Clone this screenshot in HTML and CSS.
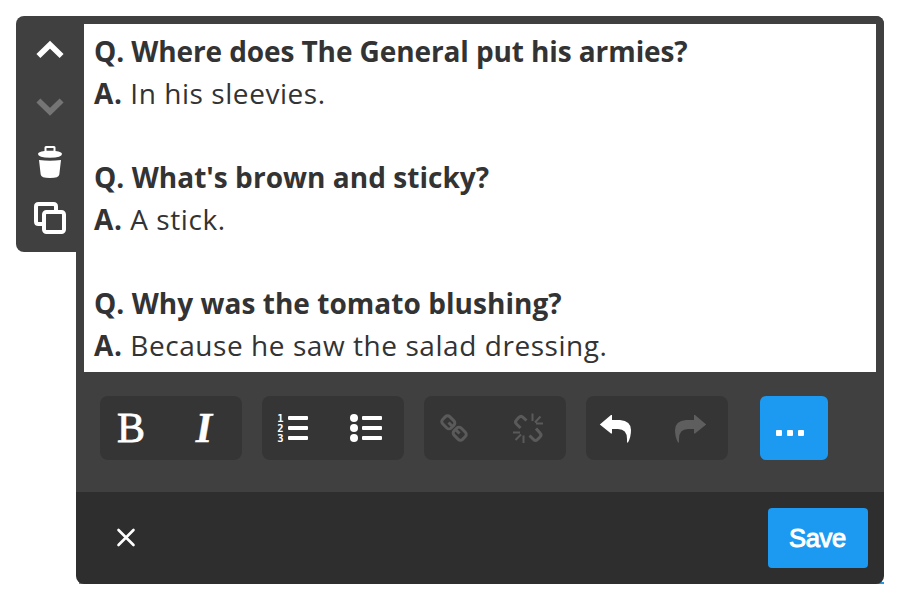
FILE: index.html
```
<!DOCTYPE html>
<html lang="en">
<head>
  <meta charset="UTF-8" />
  <meta name="viewport" content="width=device-width, initial-scale=1.0" />
  <title>Text Block Editor</title>
  <link rel="stylesheet" href="styles.css">
</head>
<body>
  <div class="block">
    <div class="side-controls">
      <button aria-label="Move up">
        <svg width="40" height="40" viewBox="0 0 40 40"><path class="chevron" d="M8.4 26.1 20 14.7 31.6 26.1"/></svg>
      </button>
      <button class="disabled" aria-label="Move down">
        <svg width="40" height="40" viewBox="0 0 40 40"><path class="chevron" d="M8.4 14.4 20 25.8 31.6 14.4"/></svg>
      </button>
      <button aria-label="Delete">
        <svg width="40" height="40" viewBox="0 0 40 40">
          <path fill="#fff" fill-rule="evenodd" d="M14.5 9V5.5Q14.5 4 16 4H24Q25.5 4 25.5 5.5V9C30 9.5 32 10.8 32 12Q32 15.7 20 15.7T8 12C8 10.8 10 9.5 14.5 9ZM16.500 6V8.700H23.500V6Z"/>
          <path fill="#fff" d="M9 18Q20 19.3 31 18L29.3 32.5Q29 36 20 36T10.7 32.5Z"/>
        </svg>
      </button>
      <button aria-label="Duplicate">
        <svg width="40" height="40" viewBox="0 0 40 40">
          <path class="outline" d="M12 26H8.500Q6 26 6 23.500V8.500Q6 6 8.500 6H23.500Q26 6 26 8.500V12"/>
          <rect class="outline" x="14" y="14" width="20" height="20" rx="2.500"/>
        </svg>
      </button>
    </div>

    <div class="panel">
      <div class="editor" contenteditable="true" spellcheck="false">
        <p class="question"><b>Q. Where does The General put his armies?</b></p>
        <p><b>A.</b> In his sleevies.</p>
        <p><br></p>
        <p class="question"><b>Q. What's brown and sticky?</b></p>
        <p><b>A.</b> A stick.</p>
        <p><br></p>
        <p class="question"><b>Q. Why was the tomato blushing?</b></p>
        <p><b>A.</b> Because he saw the salad dressing.</p>
      </div>

      <div class="toolbar">
        <div class="group">
          <button class="bold">B</button>
          <button class="italic">I</button>
        </div>
        <div class="group">
          <button aria-label="Numbered list">
            <svg width="71" height="64" viewBox="0 0 71 64" fill="#fff">
              <g class="digits">
                <text x="15.300" y="25.800">1</text>
                <text x="15.300" y="35.800">2</text>
                <text x="15.300" y="45.800">3</text>
              </g>
              <rect x="26" y="20" width="20" height="4" rx="1"/>
              <rect x="26" y="30" width="20" height="4" rx="1"/>
              <rect x="26" y="40" width="20" height="4" rx="1"/>
            </svg>
          </button>
          <button aria-label="Bullet list">
            <svg width="71" height="64" viewBox="0 0 71 64" fill="#fff">
              <circle cx="21" cy="22" r="4"/>
              <circle cx="21" cy="32" r="4"/>
              <circle cx="21" cy="42" r="4"/>
              <rect x="29" y="20" width="20" height="4" rx="1"/>
              <rect x="29" y="30" width="20" height="4" rx="1"/>
              <rect x="29" y="40" width="20" height="4" rx="1"/>
            </svg>
          </button>
        </div>
        <div class="group">
          <button aria-label="Link">
            <svg width="71" height="64" viewBox="0 0 71 64" class="link-icon">
              <rect x="18.300" y="21.300" width="12" height="10" rx="3" transform="rotate(45 24.300 26.300)"/>
              <rect x="29.700" y="32.700" width="12" height="10" rx="3" transform="rotate(45 35.700 37.700)"/>
              <path d="M24.500 26.500 28 30M32 34 35.500 37.500"/>
            </svg>
          </button>
          <button aria-label="Remove link">
            <svg width="71" height="64" viewBox="0 0 71 64" class="link-icon">
              <path d="M25.500 32 21.500 28Q19.500 26 21.500 24L24 21.300Q26 19.300 28 21.300L31.500 24.500M34.500 39.500 38.500 43.500Q40.500 45.500 42.500 43.500L45 41Q47 39 45 37L41 32.500"/>
              <path class="spark" d="M37.500 17.500V25M40 26.500 45.500 20.500M41 27.500H48M18 36.500H25M26 38.500 20.500 44M28.500 39.500V47"/>
            </svg>
          </button>
        </div>
        <div class="group">
          <button aria-label="Undo">
            <svg width="71" height="64" viewBox="0 0 71 64"><path fill="#fff" d="M13.800 28.500 25 19H26V24H34Q45 25 45 34Q45 41 42 46.500H41V43Q41 33 32 33H26V37.500H25Z"/></svg>
          </button>
          <button aria-label="Redo">
            <svg width="71" height="64" viewBox="0 0 71 64"><path fill="#5e5e5e" d="M49.200 28.500 38 19H37V24H29Q18 25 18 34Q18 41 21 46.500H22V43Q22 33 31 33H37V37.500H38Z"/></svg>
          </button>
        </div>
        <button class="more-btn" aria-label="More"><span></span><span></span><span></span></button>
      </div>

      <div class="footer">
        <button class="close-btn" aria-label="Close">
          <svg width="20" height="20" viewBox="0 0 20 20"><path d="M2.500 2 17.500 17M17.500 2 2.500 17"/></svg>
        </button>
        <button class="save-btn">Save</button>
      </div>
    </div>
  </div>
</body>
</html>
```
FILE: styles.css
```
body {
  margin: 0;
  background-color: #fff;
}

button {
  background: none;
  border: none;
  padding: 0;
  cursor: pointer;
}

svg {
  display: block;
}

.block {
  display: flex;
  align-items: flex-start;
  padding: 16px;
}

.side-controls {
  display: flex;
  flex-direction: column;
  gap: 16px;
  box-sizing: border-box;
  width: 60px;
  height: 236px;
  padding: 14px 6px 0 14px;
  background-color: #404040;
  border-radius: 8px 0 0 8px;
}

.side-controls button {
  width: 40px;
  height: 40px;
}

.chevron {
  fill: none;
  stroke: #fff;
  stroke-width: 5.6;
}

.disabled .chevron {
  stroke: #757575;
}

.outline {
  fill: none;
  stroke: #fff;
  stroke-width: 4;
}

.panel {
  width: 808px;
  height: 568px;
  background: linear-gradient(#1c9af1, #1c9af1) right bottom / 805px 2px no-repeat;
}

.editor {
  box-sizing: border-box;
  height: 356px;
  padding: 6px 10px;
  border: 8px solid #404040;
  border-bottom: none;
  border-top-right-radius: 8px;
  background-color: #fff;
  color: #333;
  font-family: "Open Sans", sans-serif;
  font-size: 28px;
  line-height: 42px;
  letter-spacing: 0.56px;
  outline: none;
}

.editor p {
  margin: 0;
}

.editor .question {
  letter-spacing: 0.04px;
}

.editor .question:first-child {
  letter-spacing: -0.1px;
}

.toolbar {
  display: flex;
  gap: 20px;
  box-sizing: border-box;
  height: 120px;
  padding: 24px;
  background-color: #404040;
}

.group {
  display: flex;
  width: 142px;
  height: 64px;
  background-color: #353535;
  border-radius: 8px;
}

.group button {
  width: 71px;
  height: 64px;
  color: #fff;
  font-family: "Liberation Serif", serif;
  font-size: 42px;
}

.group .bold {
  padding-right: 9px;
  -webkit-text-stroke: 0.8px #fff;
}

.group .italic {
  padding-right: 5px;
  font-weight: bold;
  font-style: italic;
  -webkit-text-stroke: 0.4px #fff;
}

.digits {
  font-family: "DejaVu Sans Mono", monospace;
  font-size: 10.5px;
  font-weight: bold;
}

.link-icon {
  fill: none;
  stroke: #5a5a5a;
  stroke-width: 3;
}

.link-icon .spark {
  stroke-width: 2;
}

.more-btn {
  display: flex;
  gap: 5px;
  box-sizing: border-box;
  width: 68px;
  height: 64px;
  margin-left: 12px;
  padding: 34px 0 0 16px;
  background-color: #1c9af1;
  border-radius: 6px;
}

.more-btn span {
  width: 6px;
  height: 6px;
  background-color: #fff;
  border-radius: 1px;
}

.footer {
  display: flex;
  justify-content: space-between;
  align-items: center;
  box-sizing: border-box;
  height: 92px;
  padding: 0 16px 0 40px;
  background-color: #2e2e2e;
  border-radius: 0 0 8px 8px;
}

.close-btn path {
  fill: none;
  stroke: #fff;
  stroke-width: 2.6;
  stroke-linecap: round;
}

/* regular weight thickened a little, lighter than the bold face */
.save-btn {
  width: 100px;
  height: 60px;
  padding-right: 1px;
  background-color: #1c9af1;
  border-radius: 4px;
  color: #fff;
  font-family: "Liberation Sans", Arial, sans-serif;
  font-size: 25.5px;
  letter-spacing: -0.3px;
  -webkit-text-stroke: 1px #fff;
}
```
